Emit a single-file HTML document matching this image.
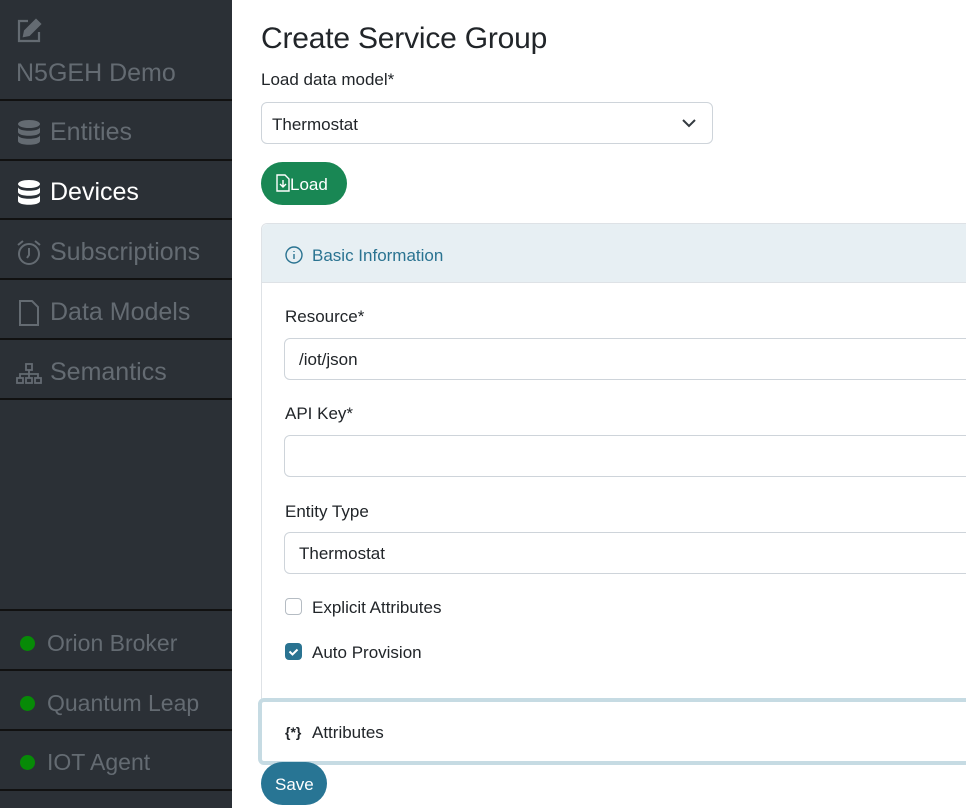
<!DOCTYPE html>
<html><head><meta charset="utf-8"><style>
*{box-sizing:border-box;margin:0;padding:0}
body{width:966px;height:808px;overflow:hidden;background:#fff;font-family:"Liberation Sans",sans-serif;position:relative;color:#212529}
.sb{position:absolute;left:0;top:0;width:232px;height:808px;background:#2b3036}
.hr{position:absolute;left:0;width:232px;height:2px;background:#111}
.it{position:absolute;left:16px;font-size:25px;color:#646b72;white-space:nowrap;display:flex;align-items:center}
.it svg{margin-right:8px}
.dot{display:inline-block;width:15px;height:15px;border-radius:50%;background:#078a07;margin:0 12px 0 4px}
.a{position:absolute}
.lbl{position:absolute;font-size:17px;color:#212529}
.inp{position:absolute;left:284px;width:700px;height:42px;border:1px solid #ced4da;border-radius:6px;font-size:17px;padding:11px 14px}
</style></head><body>
<div class="sb">
  <svg class="a" style="left:16px;top:18px" width="26" height="26" viewBox="0 0 26 26" fill="none" stroke="#646b72" stroke-width="2.2"><path d="M12 3H3v20h20v-9"/><path d="M20 2l4 4-11 11-5 1 1-5z" fill="#646b72"/></svg>
  <div class="it" style="top:59px;">N5GEH Demo</div>
  <div class="hr" style="top:99px"></div>
  <div class="it" style="top:118px"><svg width="26" height="28" viewBox="0 0 26 28" fill="#646b72"><ellipse cx="13" cy="5" rx="11" ry="4"/><path d="M2 8c0 5 22 5 22 0v5c0 5-22 5-22 0z"/><path d="M2 16c0 5 22 5 22 0v6c0 5-22 5-22 0z"/></svg>Entities</div>
  <div class="hr" style="top:159px"></div>
  <div class="it" style="top:178px;color:#fff"><svg width="26" height="28" viewBox="0 0 26 28" fill="#fff"><ellipse cx="13" cy="5" rx="11" ry="4"/><path d="M2 8c0 5 22 5 22 0v5c0 5-22 5-22 0z"/><path d="M2 16c0 5 22 5 22 0v6c0 5-22 5-22 0z"/></svg>Devices</div>
  <div class="hr" style="top:218px"></div>
  <div class="it" style="top:238px"><svg width="26" height="28" viewBox="0 0 26 28" fill="none" stroke="#646b72" stroke-width="2"><circle cx="13" cy="15" r="10"/><path d="M13 9v7l-2 3"/><path d="M2 6l5-4M24 6l-5-4"/></svg>Subscriptions</div>
  <div class="hr" style="top:278px"></div>
  <div class="it" style="top:298px"><svg width="26" height="28" viewBox="0 0 26 28" fill="none" stroke="#646b72" stroke-width="2"><path d="M4 2h12l6 6v18H4z"/></svg>Data Models</div>
  <div class="hr" style="top:338px"></div>
  <div class="it" style="top:358px"><svg width="26" height="28" viewBox="0 0 26 28" fill="none" stroke="#646b72" stroke-width="1.8"><rect x="10" y="5" width="6" height="6"/><path d="M13 11v4M4 19v-4h18v4M13 15v4"/><rect x="1" y="19" width="6" height="5"/><rect x="10" y="19" width="6" height="5"/><rect x="19" y="19" width="6" height="5"/></svg>Semantics</div>
  <div class="hr" style="top:398px"></div>
  <div class="hr" style="top:609px"></div>
  <div class="it" style="top:630px;font-size:23px"><span class="dot"></span>Orion Broker</div>
  <div class="hr" style="top:669px"></div>
  <div class="it" style="top:690px;font-size:23px"><span class="dot"></span>Quantum Leap</div>
  <div class="hr" style="top:729px"></div>
  <div class="it" style="top:749px;font-size:23px"><span class="dot"></span>IOT Agent</div>
  <div class="hr" style="top:789px"></div>
</div>

<div class="a" style="left:261px;top:22px;font-size:30px;color:#212529;letter-spacing:-0.2px">Create Service Group</div>
<div class="lbl" style="left:261px;top:70px">Load data model*</div>
<div class="a" style="left:261px;top:102px;width:452px;height:42px;border:1px solid #ced4da;border-radius:6px;font-size:17px;padding:12px 10px">Thermostat
  <svg class="a" style="right:16px;top:15px" width="14" height="10" viewBox="0 0 14 10" fill="none" stroke="#343a40" stroke-width="2"><path d="M1 2l6 6 6-6"/></svg></div>
<div class="a" style="left:261px;top:162px;width:86px;height:43px;background:#198754;border-radius:22px;color:#fff;font-size:17px;padding:13px 0 0 15px;display:flex;align-items:flex-start">
  <svg width="14" height="18" viewBox="0 0 14 18" fill="none" stroke="#fff" stroke-width="1.4" style="margin-top:-1px"><path d="M1 1h8l4 4v12H1z"/><path d="M7 6v7M4 10l3 3 3-3"/></svg>Load</div>

<div class="a" style="left:261px;top:223px;width:720px;height:480px;border:1px solid #dee2e6;border-radius:6px 0 0 0"></div>
<div class="a" style="left:262px;top:224px;width:710px;height:59px;background:#e7eff3;border-bottom:1px solid #dee2e6;border-radius:6px 0 0 0"></div>
<svg class="a" style="left:285px;top:246px" width="18" height="18" viewBox="0 0 18 18" fill="none" stroke="#2a7391" stroke-width="1.4"><circle cx="9" cy="9" r="8"/><path d="M9 8v5M9 5v1"/></svg>
<div class="a" style="left:312px;top:246px;font-size:17px;color:#2a7391">Basic Information</div>

<div class="lbl" style="left:285px;top:307px">Resource*</div>
<div class="inp" style="top:338px">/iot/json</div>
<div class="lbl" style="left:285px;top:404px">API Key*</div>
<div class="inp" style="top:435px"></div>
<div class="lbl" style="left:285px;top:502px">Entity Type</div>
<div class="inp" style="top:532px">Thermostat</div>

<div class="a" style="left:285px;top:598px;width:17px;height:17px;border:1px solid #b5bcc3;border-radius:4px"></div>
<div class="lbl" style="left:312px;top:598px">Explicit Attributes</div>
<div class="a" style="left:285px;top:643px;width:17px;height:17px;background:#2a7391;border-radius:4px"><svg width="17" height="17" viewBox="0 0 17 17" fill="none" stroke="#fff" stroke-width="2"><path d="M4.5 8.5l3 3 5-5"/></svg></div>
<div class="lbl" style="left:312px;top:643px">Auto Provision</div>

<div class="a" style="left:258px;top:698px;width:730px;height:67px;border:4px solid #c6dbe3;border-radius:6px;background:#fff"></div>
<div class="a" style="left:285px;top:724px;font-size:14px;color:#212529;font-weight:bold">{*}</div>
<div class="lbl" style="left:312px;top:723px">Attributes</div>

<div class="a" style="left:261px;top:762px;width:66px;height:43px;background:#287594;border-radius:22px;color:#fff;font-size:17px;padding:13px 0 0 14px">Save</div>
</body></html>
